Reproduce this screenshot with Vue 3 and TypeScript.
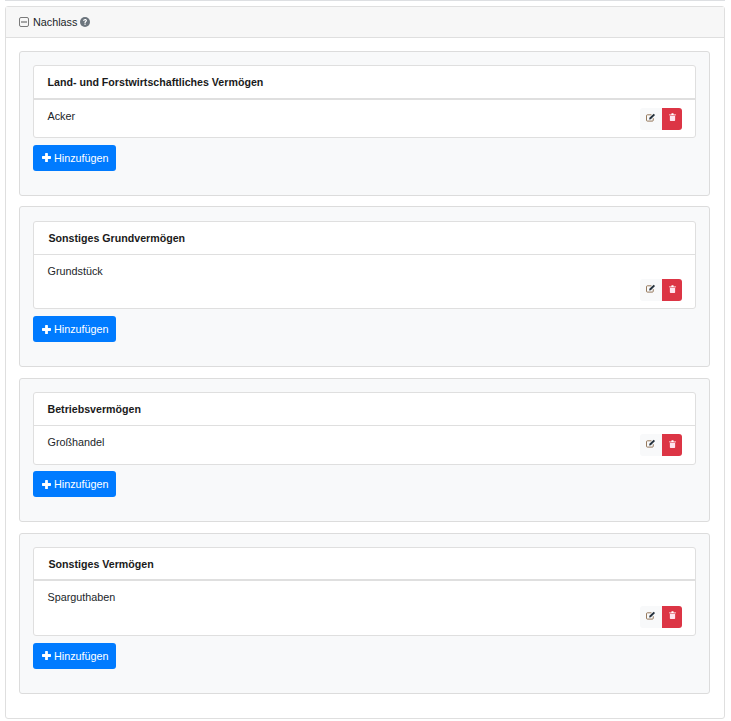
<script setup lang="ts">
interface Section {
  title: string
  item: string
  stacked: boolean
  thick: boolean
  indent: boolean
}
const sections: Section[] = [
  { title: 'Land- und Forstwirtschaftliches Vermögen', item: 'Acker', stacked: false, thick: true, indent: false },
  { title: 'Sonstiges Grundvermögen', item: 'Grundstück', stacked: true, thick: false, indent: true },
  { title: 'Betriebsvermögen', item: 'Großhandel', stacked: false, thick: false, indent: false },
  { title: 'Sonstiges Vermögen', item: 'Sparguthaben', stacked: true, thick: true, indent: true }
]
</script>

<template>
  <div class="page">
    <div class="sliver"></div>
    <div class="outer">
      <div class="outer-head">
        <svg class="minus" width="10" height="10" viewBox="0 0 10 10">
          <rect x="0.5" y="0.5" width="9" height="9" rx="1.5" fill="none" stroke="#7a7a7a" />
          <path d="M2 5h6" stroke="#555" stroke-width="1" />
        </svg>
        <span class="head-text">Nachlass</span>
        <svg class="help" width="10" height="10" viewBox="0 0 10 10">
          <circle cx="5" cy="5" r="5" fill="#6c757d" />
          <path d="M3.100 3.800C3.200 2.700 4 2 5.100 2c1.100 0 1.900.7 1.900 1.600 0 1.300-1.300 1.300-1.300 2.300H4.400c0-1.500 1.300-1.600 1.300-2.300 0-.3-.3-.5-.6-.5-.4 0-.7.300-.8.800z" fill="#fff" />
          <rect x="4.400" y="6.500" width="1.300" height="1.300" fill="#fff" />
        </svg>
      </div>
      <div class="outer-body">
        <section v-for="s in sections" :key="s.title" class="well" :class="{ tall: s.stacked }">
          <div class="card">
            <div class="card-head" :class="{ thick: s.thick, indent: s.indent }">{{ s.title }}</div>
            <div class="row" :class="{ stacked: s.stacked }">
              <span class="item">{{ s.item }}</span>
              <div class="actions">
                <button class="btn-edit" type="button" aria-label="Bearbeiten">
                  <svg width="10" height="9" viewBox="0 0 11 10">
                    <path d="M8 5.800V8a1 1 0 0 1-1 1H1.500a1 1 0 0 1-1-1V3a1 1 0 0 1 1-1H6" fill="none" stroke="#8a6a4a" stroke-width="1" />
                    <path d="M3.700 5.400 8.500.8l1.500 1.400-4.700 4.700-1.800.2z" fill="#24303c" />
                  </svg>
                </button>
                <button class="btn-del" type="button" aria-label="Löschen">
                  <svg width="7" height="8" viewBox="0 0 8 9">
                    <path d="M0 1.500h8v1H0zM2.600 1.500 3 .3h2l.4 1.200z" fill="#fff" />
                    <path d="M1 3h6v5.200a.8.8 0 0 1-.8.8H1.800a.8.8 0 0 1-.8-.8z" fill="#ffe4ee" />
                  </svg>
                </button>
              </div>
            </div>
          </div>
          <button class="btn-add" type="button">
            <svg width="9" height="9" viewBox="0 0 9 9">
              <path d="M3.100.6a.6.600 0 0 1 .6-.6h1.600a.6.600 0 0 1 .6.600v2.500h2.500a.6.600 0 0 1 .6.600v1.600a.6.600 0 0 1-.6.600H5.900v2.500a.6.600 0 0 1-.6.600H3.700a.6.600 0 0 1-.6-.6V5.900H.6a.6.600 0 0 1-.6-.6V3.700a.6.600 0 0 1 .6-.6h2.500z" fill="#fff" />
            </svg>
            <span>Hinzufügen</span>
          </button>
        </section>
      </div>
    </div>
  </div>
</template>

<style>
html, body {
  margin: 0;
  background: #fff;
}
</style>

<style scoped>
.page {
  width: 731px;
  height: 721px;
  box-sizing: border-box;
  padding: 0 6px 0 5px;
  overflow: hidden;
  font-family: "Liberation Sans", Arial, sans-serif;
  font-size: 10.8px;
  color: #212529;
}
.sliver {
  height: 0;
  border-bottom: 1px solid #dddfe2;
  margin-bottom: 5px;
}
.outer {
  border: 1px solid #dfdfdf;
  border-radius: 3px;
  height: 713px;
  box-sizing: border-box;
}
.outer-head {
  height: 31px;
  box-sizing: border-box;
  background: #f7f7f7;
  border-bottom: 1px solid #dfdfdf;
  display: flex;
  align-items: center;
  padding-left: 13px;
  padding-bottom: 1px;
}
.minus {
  margin-right: 4px;
}
.head-text {
  margin-right: 3px;
}
.outer-body {
  padding: 13.350px 14px 0 13px;
}
.well {
  background: #f8f9fa;
  border: 1px solid #dcdcdc;
  border-radius: 3px;
  padding: 13.100px 13px 23.900px;
  margin-bottom: 10.850px;
}
.well.tall {
  padding-bottom: 24.100px;
}
.card {
  background: #fff;
  border: 1px solid #dfdfdf;
  border-radius: 3px;
}
.card-head {
  height: 33.300px;
  box-sizing: border-box;
  border-bottom: 1px solid #dfdfdf;
  display: flex;
  align-items: center;
  padding-left: 13.500px;
  font-size: 10.650px;
  font-weight: 700;
  color: #1a1a1a;
}
.card-head.thick {
  border-bottom-width: 2px;
}
.card-head.indent {
  padding-left: 14.500px;
}
.row {
  display: flex;
  justify-content: space-between;
  align-items: flex-start;
  padding: 8px 13px 7.300px 13.500px;
}
.row.stacked {
  flex-direction: column;
  align-items: stretch;
  padding-top: 8px;
  padding-bottom: 7.100px;
}
.item {
  line-height: 16.200px;
}
.row.stacked .actions {
  align-self: flex-end;
}
.actions {
  display: flex;
  height: 22px;
}
.actions button {
  border: 0;
  padding: 0;
  height: 22px;
  display: flex;
  align-items: center;
  justify-content: center;
}
.btn-edit {
  width: 22px;
  background: #f8f9fa;
  border-radius: 3px 0 0 3px;
  padding-bottom: 3px !important;
}
.btn-del {
  width: 20px;
  background: #dc3545;
  border-radius: 0 3px 3px 0;
  padding-bottom: 3px !important;
}
.btn-add {
  margin-top: 6.650px;
  width: 83px;
  height: 26px;
  border: 0;
  border-radius: 3px;
  background: #007bff;
  color: #fff;
  font: inherit;
  padding: 0 0 0 9px;
  display: flex;
  align-items: center;
  justify-content: flex-start;
  gap: 3px;
}
.well.tall .btn-add {
  margin-top: 7px;
}
</style>
